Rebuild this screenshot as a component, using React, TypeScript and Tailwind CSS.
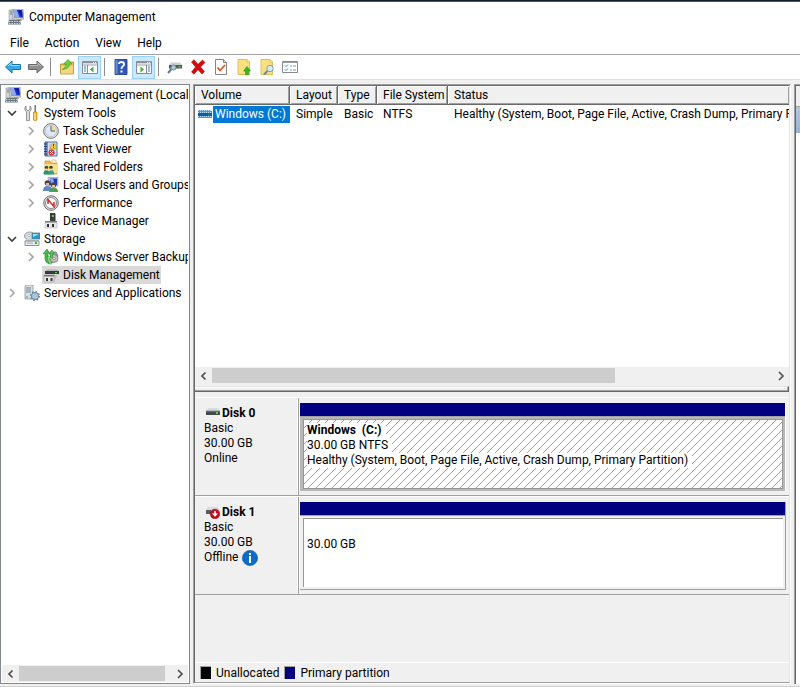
import React, { useState } from 'react';

type IconProps = { className?: string };

const Svg: React.FC<{ children: React.ReactNode; className?: string }> = ({ children, className }) => (
    <svg viewBox="0 0 16 16" className={className ?? 'w-4 h-4 shrink-0'} aria-hidden="true">
        {children}
    </svg>
);

const ComputerIcon: React.FC<IconProps> = ({ className }) => (
    <Svg className={className}>
        <path d="M1 1h4v10H1z" fill="#d4d8da" stroke="#8d959a" strokeWidth=".6" />
        <path d="M2 3h2M2 5h2" stroke="#70797f" />
        <path d="M4 0h11l1 10-11 1z" fill="#d3d0c6" stroke="#8f8d84" strokeWidth=".6" />
        <path d="M5.500 1H14l.8 7.500H6.300z" fill="#1a35cf" />
        <path d="M5.500 1H9l2.500 7.500H6.300z" fill="#8fa9ee" />
        <path d="M9 1h5l.8 7.500z" fill="#0a1ca8" />
        <path d="M9 10h4l1 2H8z" fill="#9aa0a3" />
        <path d="M1 11h11l1 4.500H0z" fill="#66767c" />
        <path d="M1 12.500h11M1 14.500h11" stroke="#cfd6d9" strokeDasharray="1.500 1" />
    </Svg>
);

const ToolsIcon = () => (
    <Svg>
        <path d="M2 1v3l2 2 2-2V1q2 2 1 4L5.500 7v8.500h-3V7L1 5Q0 3 2 1z" fill="#dadcde" stroke="#7c7f82" strokeWidth=".8" />
        <path d="M10.500 0h1.500v7h-1.500z" fill="#777" />
        <path d="M9.500 7h3.500v8q-1.700 1.500-3.500 0z" fill="#f2b632" stroke="#b67b0b" strokeWidth=".6" />
        <path d="M11 8v7" stroke="#fff0b0" />
    </Svg>
);

const ClockIcon = () => (
    <Svg>
        <circle cx="8" cy="8" r="7.400" fill="#dfe3e6" stroke="#747b81" strokeWidth="1" />
        <circle cx="8" cy="8" r="5.600" fill="#dfe9f5" stroke="#a9b0b5" strokeWidth=".6" />
        <path d="M8 8V2.500A5.500 5.500 0 0 1 13.500 8z" fill="#f7d795" />
        <path d="M8 3v5h4" fill="none" stroke="#4b6583" strokeWidth="1" />
    </Svg>
);

const EventIcon = () => (
    <Svg>
        <path d="M2 1h12v14H2z" fill="#6f93cc" stroke="#314f87" strokeWidth=".8" />
        <path d="M5 1.500h8.500v13H5z" fill="#cfdef2" />
        <path d="M6 4h7M6 6h7M6 8h7M6 12h7" stroke="#88a6d0" strokeWidth=".7" />
        <path d="M1 3h3M1 5.500h3M1 8h3M1 10.500h3M1 13h3" stroke="#263f6d" />
        <path d="M10.500 1L14 7.500H7z" fill="#ffd829" stroke="#bc8b00" strokeWidth=".5" />
        <path d="M10.500 3v2.500M10.500 6v1" stroke="#3b2c00" strokeWidth=".8" />
        <circle cx="8.500" cy="11.500" r="3" fill="#dc2c36" />
        <path d="M7 10l3 3M10 10l-3 3" stroke="#fff" />
    </Svg>
);

const SharedIcon = () => (
    <Svg>
        <path d="M2 2h5l1 2h6v11H2z" fill="#f0bd4d" stroke="#c6922b" strokeWidth=".7" />
        <path d="M2 5h13v9H2z" fill="#fbe08f" />
        <path d="M9 1h4v3H9z" fill="#fff" stroke="#c6922b" strokeWidth=".5" />
        <circle cx="3.500" cy="8.500" r="1.800" fill="#434b3f" />
        <circle cx="8" cy="8.500" r="1.800" fill="#5a3824" />
        <path d="M.5 15.500q0-4.500 3-4.500t3 4.500z" fill="#259675" />
        <path d="M5.500 15.500q0-4.500 2.800-4.500t2.800 4.500z" fill="#2aa58c" />
        <path d="M3.500 9.500v2M8 9.500v2" stroke="#f8d6b2" strokeWidth="1.500" />
    </Svg>
);

const UsersIcon = () => (
    <Svg>
        <path d="M5 0h10v9H6z" fill="#c1c7cd" stroke="#7e868c" strokeWidth=".5" />
        <path d="M7 1.500h7V8H7z" fill="#1c36c3" />
        <path d="M7 1.500h3L12 8H8z" fill="#89a7ef" />
        <circle cx="4.500" cy="6" r="2.800" fill="#4c4238" />
        <path d="M3 6h3v3H3z" fill="#e2b58d" />
        <path d="M0 14q0-5 4.500-5T9 14z" fill="#5b88ce" />
        <circle cx="10.500" cy="8" r="2.700" fill="#53402f" />
        <path d="M9 8h3v3H9z" fill="#ebc19a" />
        <path d="M6 15q0-4.500 4.500-4.500T15 15z" fill="#4e9e59" />
    </Svg>
);

const PerformanceIcon = () => (
    <Svg>
        <circle cx="8" cy="8" r="7.300" fill="#e4e4e4" stroke="#6f6f6f" />
        <circle cx="8" cy="8" r="5.500" fill="#fff" stroke="#777" strokeWidth=".9" />
        <path d="M5 9V4.500l6 7V7" fill="none" stroke="#d42626" strokeWidth="1.500" />
    </Svg>
);

const DeviceIcon = () => (
    <Svg>
        <path d="M7 0l1-.5h4V8H7z" fill="#3c3c3c" />
        <path d="M9 2h2v2H9z" fill="#49d546" />
        <path d="M12 0l1 1v7h-1z" fill="#999" />
        <path d="M2 8h12v2H2z" fill="#7c7c7c" />
        <path d="M2 9.500h12V15H2z" fill="#e6e6e6" stroke="#a6a6a6" strokeWidth=".5" />
        <path d="M4 11h2v3H4zM9 11h2v3H9z" fill="#333" />
    </Svg>
);

const StorageIcon = () => (
    <Svg>
        <ellipse cx="5.500" cy="5" rx="5" ry="4" fill="#d8dde0" stroke="#7e8589" strokeWidth=".8" />
        <ellipse cx="5" cy="4.500" rx="1.500" ry="1" fill="#fff" stroke="#888" strokeWidth=".5" />
        <path d="M8 2h8v6H8z" fill="#299bcb" stroke="#5d7480" strokeWidth=".7" />
        <path d="M9 3h6l-6 3z" fill="#a5ddf3" />
        <path d="M1 10l1.500-2h11l2 2z" fill="#c9ced1" />
        <path d="M1 10h14v4.500H1z" fill="#e6e9eb" stroke="#777d80" strokeWidth=".8" />
        <path d="M11 11h2v2h-2z" fill="#37b936" />
        <path d="M3 12h6" stroke="#aaa" />
    </Svg>
);

const BackupIcon = () => (
    <Svg>
        <path d="M7 3h6l2 4-2 5-5 2z" fill="#a0a6aa" stroke="#5c6368" strokeWidth=".7" />
        <circle cx="11" cy="9.500" r="4" fill="#cbb9c0" stroke="#6d7478" strokeWidth=".7" />
        <circle cx="11" cy="9.500" r="1.200" fill="#fff" stroke="#705663" strokeWidth=".6" />
        <path d="M2 4v6q0 3 4 5l1-2q-3-2-2-4V4l2 1-3-5-4 5z" fill="#42bd43" stroke="#218a25" strokeWidth=".6" />
        <path d="M6 7q0 5 3 7l-1 1.500Q4 13 4.500 7z" fill="#8be67c" stroke="#218a25" strokeWidth=".5" />
        <path d="M6 5l3-4 2 4-1.500-.5v5L7.500 8V4.500z" fill="#55cd49" stroke="#218a25" strokeWidth=".5" />
    </Svg>
);

const DiskMgmtIcon = () => (
    <Svg>
        <path d="M2 4l2-1.500h10l2 1.500z" fill="#b4b4b4" />
        <path d="M2 4h14v3H2z" fill="#393939" />
        <path d="M12 5h2v1h-2z" fill="#56e455" />
        <path d="M1 8h10v7H1z" fill="#e8e8e8" stroke="#999" strokeWidth=".6" />
        <path d="M1 8h10v1.500H1z" fill="#777" />
        <path d="M3 11h2v3H3zM7.500 11h2v3h-2z" fill="#333" />
        <path d="M11 8h3l-3 6z" fill="#bababa" />
    </Svg>
);

const ServicesIcon = () => (
    <Svg>
        <path d="M1 1l1-1h7v14H1z" fill="#d8e0e6" stroke="#7e8b94" strokeWidth=".7" />
        <path d="M2 3h5M2 5h5M2 7h5" stroke="#738592" />
        <path d="M2 12h2" stroke="#3eac3c" />
        <circle cx="11" cy="11" r="3.400" fill="#cfe0ee" stroke="#6689a7" strokeWidth="1.200" />
        <circle cx="11" cy="11" r="4.500" fill="none" stroke="#6689a7" strokeWidth="1.200" strokeDasharray="1.600 1.930" />
        <circle cx="11" cy="11" r="1.300" fill="#fff" stroke="#5d7c96" strokeWidth=".7" />
    </Svg>
);

const ArrowIcon: React.FC<{ back?: boolean }> = ({ back }) => (
    <Svg>
        {back ? (
            <path d="M.5 8L7 2v3.500h8.500v5H7V14z" fill="#36aae6" stroke="#1774ae" strokeLinejoin="round" />
        ) : (
            <path d="M15.500 8L9 2v3.500H.5v5H9V14z" fill="#8f8f8f" stroke="#676767" strokeLinejoin="round" />
        )}
        <path d={back ? 'M3 7l3-3v2.500h8.500' : 'M1.500 6.500H10V4l3 3'} fill="none" stroke={back ? '#94dcf8' : '#bcbcbc'} />
    </Svg>
);

const UpFolderIcon = () => (
    <Svg>
        <path d="M1.500 5h6l1-2h6v12h-13z" fill="#e6bf5c" stroke="#b98d29" strokeWidth=".8" />
        <path d="M2 7h12v7.500H2z" fill="#f4d77f" />
        <path d="M3 10.500q4-1 4-5.500H4.500l4.500-4.500 4 4.500h-2.500Q10.500 10 3 10.500z" fill="#6fcf3f" stroke="#3b9a1e" strokeWidth=".6" />
    </Svg>
);

const PaneIcon: React.FC<{ flip?: boolean }> = ({ flip }) => (
    <Svg>
        <path d="M.5 2.500h15v12H.5z" fill="#fff" stroke="#858b92" />
        <path d="M1 2h14v3H1z" fill="#8b9197" />
        <path d="M1 4.500h14" stroke="#d9dde0" />
        <path d="M11 3.500h1M13 3.500h1" stroke="#fff" />
        <path d="M1 6h14" stroke="#7f858b" strokeWidth=".8" />
        {flip ? (
            <>
                <path d="M10.500 6v8" stroke="#858b92" />
                <path d="M12 8h2M12 10h2M12 12h2" stroke="#3376be" />
                <path d="M4.500 7.500L8 10.500l-3.500 3z" fill="#3fae35" />
            </>
        ) : (
            <>
                <path d="M5.500 6v8" stroke="#858b92" />
                <path d="M2 8h2M2 10h2M2 12h2" stroke="#3376be" />
                <path d="M11.500 7.500L8 10.500l3.500 3z" fill="#3fae35" />
            </>
        )}
    </Svg>
);

const HelpIcon = () => (
    <Svg>
        <path d="M2 .5h12v15H2z" fill="#3159bd" stroke="#1b367d" strokeWidth=".8" />
        <path d="M2.500 1h2v14h-2z" fill="#6d8de0" />
        <path d="M6 5q0-2 2.500-2T11 5.300q0 1.300-1.500 2.200Q8.500 8 8.500 10" fill="none" stroke="#fff" strokeWidth="1.800" />
        <path d="M7.500 11.500h2v2h-2z" fill="#fff" />
    </Svg>
);

const RescanIcon = () => (
    <Svg>
        <path d="M2 6l2-2.500h9l2 2.500z" fill="#cdd0d2" />
        <path d="M2 6h13v3.500H2z" fill="#505457" />
        <path d="M11.500 7h2v1.500h-2z" fill="#50dd44" />
        <path d="M4.500 10L1 14" stroke="#5c7d90" strokeWidth="2" />
        <circle cx="6.500" cy="8.500" r="2.500" fill="#a9cadd" stroke="#6d8ea2" />
    </Svg>
);

const DeleteIcon = () => (
    <Svg>
        <path d="M1.500 3L4 .8 8 5.300 12.500 1 15 3.500 10.500 8l4 4.500-2.500 2.500-4-4.300L4 15.200 1.500 13l4-5z" fill="#d50b0b" stroke="#9b0000" strokeWidth=".5" />
    </Svg>
);

const CheckPageIcon = () => (
    <Svg>
        <path d="M2.500.5h8l3 3v12h-11z" fill="#fcfcfc" stroke="#858585" />
        <path d="M10.500.5v3h3" fill="#ddd" stroke="#858585" />
        <path d="M4.500 8.500l2.500 3L12 6" fill="none" stroke="#e2571b" strokeWidth="1.800" />
    </Svg>
);

const YellowPageIcon: React.FC<{ search?: boolean }> = ({ search }) => (
    <Svg>
        <path d="M2 .5h9l2.500 2.500v12.500H2z" fill="#fbe07f" stroke="#e2bf56" />
        <path d="M11 .5V3h2.500" fill="#fff5c9" stroke="#e2bf56" />
        {search ? (
            <>
                <path d="M8.500 12L5 15.500" stroke="#6488a0" strokeWidth="2" />
                <circle cx="11" cy="9.500" r="3.200" fill="#d5ebf7" stroke="#839baa" />
            </>
        ) : (
            <path d="M11 7.500l3.500 4.500h-2v4h-3v-4h-2z" fill="#34bb20" stroke="#20850f" strokeWidth=".5" />
        )}
    </Svg>
);

const ListIcon = () => (
    <Svg>
        <path d="M.5 2.500h15v11H.5z" fill="#fff" stroke="#858b92" />
        <path d="M1 3h14v1H1z" fill="#9aa0a6" />
        <path d="M3 6.500l1 1 2-2M3 10.500l1 1 2-2" fill="none" stroke="#2a83c8" />
        <path d="M8 7h2M11 7h3M8 11h2M11 11h3" stroke="#8c9298" />
    </Svg>
);

const Chevron: React.FC<{ dir: 'left' | 'right' | 'down' }> = ({ dir }) => {
    const points = { left: 'M6.500 1.500L3 5l3.500 3.500', right: 'M3 1L7 5 3 9', down: 'M1 3l4 4 4-4' };
    return (
        <svg viewBox="0 0 10 10" className="h-[10px] w-[10px]" fill="none" stroke="currentColor" strokeWidth="1.700" aria-hidden="true">
            <path d={points[dir]} />
        </svg>
    );
};

interface TreeItem {
    label: string;
    icon: React.ReactNode;
    level: 1 | 2;
    state?: 'open' | 'closed';
}

const TREE: TreeItem[] = [
    { label: 'System Tools', icon: <ToolsIcon />, level: 1, state: 'open' },
    { label: 'Task Scheduler', icon: <ClockIcon />, level: 2, state: 'closed' },
    { label: 'Event Viewer', icon: <EventIcon />, level: 2, state: 'closed' },
    { label: 'Shared Folders', icon: <SharedIcon />, level: 2, state: 'closed' },
    { label: 'Local Users and Groups', icon: <UsersIcon />, level: 2, state: 'closed' },
    { label: 'Performance', icon: <PerformanceIcon />, level: 2, state: 'closed' },
    { label: 'Device Manager', icon: <DeviceIcon />, level: 2 },
    { label: 'Storage', icon: <StorageIcon />, level: 1, state: 'open' },
    { label: 'Windows Server Backup', icon: <BackupIcon />, level: 2, state: 'closed' },
    { label: 'Disk Management', icon: <DiskMgmtIcon />, level: 2 },
    { label: 'Services and Applications', icon: <ServicesIcon />, level: 1, state: 'closed' },
];

const ToolButton: React.FC<{ label: string; active?: boolean; children: React.ReactNode }> = ({ label, active, children }) => (
    <button
        type="button"
        aria-label={label}
        className={`flex h-[23px] w-[23px] shrink-0 items-center justify-center ${active ? 'bg-[#cce8ff] outline outline-1 -outline-offset-1 outline-[#99d1ff]' : ''}`}
    >
        {children}
    </button>
);

const ToolSeparator = () => <span className="ml-[3px] mr-1 h-[18px] w-px shrink-0 bg-[#8d8d8d]" />;

const ScrollBar: React.FC<{ thumb: string }> = ({ thumb }) => (
    <div className="flex h-[17px] shrink-0 items-stretch bg-[#f0f0f0] text-[#505050]">
        <button type="button" aria-label="Scroll left" className="flex w-[17px] items-center justify-center">
            <Chevron dir="left" />
        </button>
        <div className="flex-1 py-px">
            <div className={`h-full bg-[#cdcdcd] ${thumb}`} />
        </div>
        <button type="button" aria-label="Scroll right" className="flex w-[17px] items-center justify-center">
            <Chevron dir="right" />
        </button>
    </div>
);

const Tree = () => {
    const [selected, setSelected] = useState('Disk Management');

    return (
        <nav className="flex w-[190px] shrink-0 flex-col border border-[#828790] bg-white p-px">
            <div className="flex-1 overflow-hidden whitespace-nowrap">
                <button type="button" className="flex h-[18px] items-center gap-[5px] pl-[3px]">
                    <ComputerIcon />
                    Computer Management (Local
                </button>
                {TREE.map(item => (
                    <div key={item.label} className={`flex h-[18px] items-center ${item.level === 1 ? 'pl-[5px]' : 'pl-[24px]'}`}>
                        <span className={`w-[16px] shrink-0 ${item.state === 'open' ? 'text-[#404040]' : 'text-[#a6a6a6]'}`}>
                            {item.state && <Chevron dir={item.state === 'open' ? 'down' : 'right'} />}
                        </span>
                        <button
                            type="button"
                            onClick={() => setSelected(item.label)}
                            className={`flex h-[18px] items-center gap-1 px-[1px] ${selected === item.label ? 'bg-[#d9d9d9]' : ''}`}
                        >
                            {item.icon}
                            {item.label}
                        </button>
                    </div>
                ))}
            </div>
            <ScrollBar thumb="w-[96%]" />
        </nav>
    );
};

const VOLUME_COLUMNS = [
    { name: 'Volume', width: 'w-[95px]' },
    { name: 'Layout', width: 'w-[48px]' },
    { name: 'Type', width: 'w-[39px]' },
    { name: 'File System', width: 'w-[71px]' },
    { name: 'Status', width: '' },
];

const VolumeTable = () => (
    <section className="flex h-[306px] shrink-0 flex-col bg-white">
        <div className="flex-1 overflow-hidden">
            <table className="w-full table-fixed border-separate border-spacing-0 whitespace-nowrap text-left">
                <thead>
                    <tr className="bg-[#f0f0f0]">
                        {VOLUME_COLUMNS.map(col => (
                            <th key={col.name} className={`border-b border-r border-[#696969] p-0 pl-[6px] font-normal leading-[18px] shadow-[inset_1px_1px_#ffffff,inset_-1px_-1px_#a0a0a0] last:border-r-0 ${col.width}`}>
                                {col.name}
                            </th>
                        ))}
                    </tr>
                </thead>
                <tbody>
                    <tr>
                        <td className="p-0">
                            <div className="flex items-center gap-px pl-[3px]">
                                <svg viewBox="0 0 14 8" className="h-[8px] w-[14px] shrink-0" shapeRendering="crispEdges" aria-hidden="true">
                                    <path d="M1 0h12l1 2v6H0V2z" fill="#3d9ce0" />
                                    <path d="M0 3h14v3H0z" fill="#0f5e9c" />
                                    <path d="M0 .5h14M0 2.500h14M0 6.500h14" stroke="#b8dcf5" strokeDasharray="1 1" />
                                    <path d="M10 4h2v2h-2z" fill="#20875a" />
                                </svg>
                                <span className="flex-1 bg-[#0078d7] pl-[2px] leading-[17px] text-white">Windows (C:)</span>
                            </div>
                        </td>
                        <td className="p-0 pl-[6px]">Simple</td>
                        <td className="p-0 pl-[6px]">Basic</td>
                        <td className="p-0 pl-[6px]">NTFS</td>
                        <td className="overflow-hidden p-0 pl-[6px]">Healthy (System, Boot, Page File, Active, Crash Dump, Primary Partition)</td>
                    </tr>
                </tbody>
            </table>
        </div>
        <ScrollBar thumb="w-[72%]" />
        <div className="h-[2px] shrink-0 bg-[#f0f0f0]" />
        <div className="h-[6px] shrink-0 border-b border-r border-t border-[#696969] border-t-[#e3e3e3] bg-[#f0f0f0] shadow-[inset_-1px_-1px_#a0a0a0,inset_0_1px_#ffffff]" />
    </section>
);

const DiskIcon = () => (
    <svg viewBox="0 0 14 12" className="h-[12px] w-[14px]" aria-hidden="true">
        <path d="M2 0h10l2 3H0z" fill="#d9dcdf" />
        <path d="M0 3h14v4H0z" fill="#45494c" />
        <path d="M0 3h14" stroke="#8c9195" />
        <path d="M10 4h2v2h-2z" fill="#3ddd3d" />
    </svg>
);

const OfflineDiskIcon = () => (
    <svg viewBox="0 0 14 12" className="h-[12px] w-[14px]" aria-hidden="true">
        <path d="M2 0h10l2 3H0z" fill="#d9dcdf" />
        <path d="M0 3h5v4H0z" fill="#5a5e61" />
        <circle cx="9" cy="7" r="4.800" fill="#c00f20" stroke="#7c0712" strokeWidth=".5" />
        <path d="M8.200 4h1.600v2.500H12L9 9.800 6 6.500h2.200z" fill="#fff" />
    </svg>
);

const InfoIcon = () => (
    <svg viewBox="0 0 16 16" className="-my-px h-4 w-4" aria-hidden="true">
        <circle cx="8" cy="8" r="7.600" fill="#0b6ccb" stroke="#08508f" strokeWidth=".6" />
        <path d="M7 3h2v2H7zM7 6h2v7H7z" fill="#fff" />
    </svg>
);

const DiskRow: React.FC<{ name: string; icon: React.ReactNode; status: React.ReactNode; children: React.ReactNode }> = ({ name, icon, status, children }) => (
    <div className="flex h-[99px] shrink-0 border-t border-white leading-[15px]">
        <div className="w-[104px] shrink-0 border-b border-r border-[#a0a0a0] pl-[9px] pt-[8px] shadow-[inset_-1px_0_#ffffff]">
            <div className="flex h-[15px] items-center gap-[2px] pl-[2px] font-bold">
                {icon}
                {name}
            </div>
            <div>Basic</div>
            <div>30.00 GB</div>
            <div className="flex items-center gap-1">{status}</div>
        </div>
        <div className="min-w-0 flex-1 border-b border-[#a0a0a0] pb-[4px] pr-[3px] pt-[5px]">{children}</div>
    </div>
);

const Hatch = () => (
    <svg className="absolute inset-0 h-full w-full" shapeRendering="crispEdges" aria-hidden="true">
        <defs>
            <pattern id="hatch" width="8" height="8" patternUnits="userSpaceOnUse">
                <path d="M0 7h1v1H0zM1 6h1v1H1zM2 5h1v1H2zM3 4h1v1H3zM4 3h1v1H4zM5 2h1v1H5zM6 1h1v1H6zM7 0h1v1H7z" fill="#a0a0a0" />
            </pattern>
        </defs>
        <rect width="100%" height="100%" fill="url(#hatch)" />
    </svg>
);

const DiskList = () => (
    <section className="flex min-h-0 flex-1 flex-col pt-[5px]">
        <DiskRow name="Disk 0" icon={<DiskIcon />} status="Online">
            <div className="flex h-full flex-col border-x border-white">
                <div className="h-[13px] shrink-0 bg-[#000080]" />
                <div className="flex flex-1 border-t border-[#a0a0a0] bg-[#b8b8b8] p-[2px] pl-[3px]">
                    <div className="relative flex-1 border border-[#969696] bg-white pl-[3px] pt-[3px]">
                        <Hatch />
                        <div className="relative flex flex-col items-start">
                            <span className="whitespace-pre bg-white pr-1 font-bold">Windows  (C:)</span>
                            <span className="bg-white pr-1">30.00 GB NTFS</span>
                            <span className="bg-white pr-1">Healthy (System, Boot, Page File, Active, Crash Dump, Primary Partition)</span>
                        </div>
                    </div>
                </div>
            </div>
        </DiskRow>
        <DiskRow name="Disk 1" icon={<OfflineDiskIcon />} status={<>Offline <InfoIcon /></>}>
            <div className="flex h-full flex-col border-l border-r border-l-white border-r-[#a0a0a0]">
                <div className="h-[13px] shrink-0 bg-[#000080]" />
                <div className="flex flex-1 border-b border-t border-[#a0a0a0] p-[2px] pl-[3px]">
                    <div className="flex-1 border-l border-t border-[#969696] bg-white pl-[3px] pt-[18px]">30.00 GB</div>
                </div>
            </div>
        </DiskRow>
        <div className="flex-1" />
        <footer className="flex h-[20px] shrink-0 items-center gap-[5px] border-t border-white pl-[5px]">
            <span className="h-[13px] w-[11px] border-l border-t border-[#a0a0a0] bg-black" />
            Unallocated
            <span className="h-[13px] w-[11px] border-l border-t border-[#a0a0a0] bg-[#000080]" />
            Primary partition
        </footer>
    </section>
);

const App: React.FC = () => (
    <div className="flex h-screen flex-col overflow-hidden bg-[#f0f0f0] font-[Roboto,'Noto_Sans',sans-serif] text-[12px] leading-[18px] text-black">
        <header className="shrink-0 bg-white">
            <div className="h-[2px] border-b border-[#1a63ad] bg-[#101c30]" />
            <div className="flex h-[30px] items-center gap-[5px] pl-2">
                <ComputerIcon />
                <h1>Computer Management</h1>
            </div>
            <div className="flex h-[22px] items-center gap-[16px] pl-[10px]">
                {['File', 'Action', 'View', 'Help'].map(menu => (
                    <button key={menu} type="button">{menu}</button>
                ))}
            </div>
            <div className="flex h-[26px] items-center border-b border-t border-b-[#e0e0e0] border-t-[#a0a0a0] pl-px">
                <ToolButton label="Back"><ArrowIcon back /></ToolButton>
                <ToolButton label="Forward"><ArrowIcon /></ToolButton>
                <ToolSeparator />
                <ToolButton label="Up one level"><UpFolderIcon /></ToolButton>
                <ToolButton label="Show or hide console tree" active><PaneIcon /></ToolButton>
                <ToolSeparator />
                <ToolButton label="Help"><HelpIcon /></ToolButton>
                <ToolButton label="Show or hide action pane" active><PaneIcon flip /></ToolButton>
                <ToolSeparator />
                <ToolButton label="Rescan disks"><RescanIcon /></ToolButton>
                <ToolButton label="Delete"><DeleteIcon /></ToolButton>
                <ToolButton label="Properties"><CheckPageIcon /></ToolButton>
                <ToolButton label="Open"><YellowPageIcon /></ToolButton>
                <ToolButton label="Explore"><YellowPageIcon search /></ToolButton>
                <ToolButton label="Settings"><ListIcon /></ToolButton>
            </div>
        </header>
        <main className="flex min-h-0 flex-1 gap-[3px] pb-[2px] pt-[4px]">
            <Tree />
            <div className="flex min-w-0 flex-1 flex-col border border-b-white border-l-[#a0a0a0] border-r-white border-t-[#a0a0a0]">
                <div className="flex min-h-0 flex-1 flex-col border border-b-[#a0a0a0] border-l-[#696969] border-r-[#e3e3e3] border-t-[#696969]">
                    <VolumeTable />
                    <DiskList />
                </div>
            </div>
            <aside className="w-[6px] shrink-0 border-l border-t border-[#a0a0a0]">
                <div className="flex h-full flex-col border-l border-t border-[#696969] bg-white">
                    <div className="h-[21px] border-b border-[#a0a0a0] bg-[#f0f0f0]" />
                    <div className="h-[26px] bg-gradient-to-b from-[#b4c8de] to-[#99b4d1]" />
                </div>
            </aside>
        </main>
        <div className="h-px shrink-0 bg-[#d0d0d0]" />
    </div>
);

export default App;
